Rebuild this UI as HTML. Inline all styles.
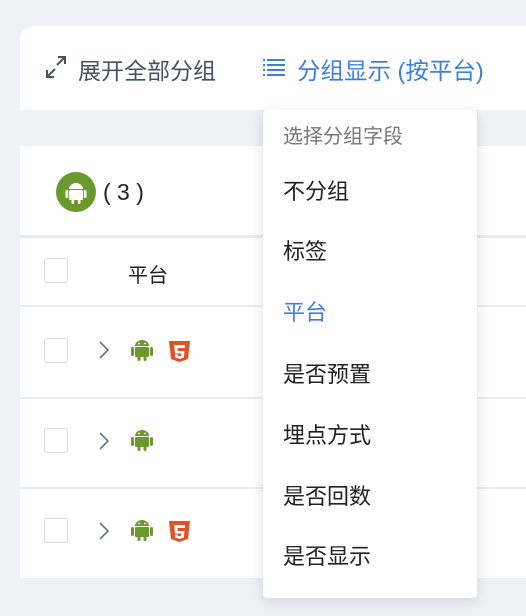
<!DOCTYPE html>
<html><head><meta charset="utf-8"><style>
*{margin:0;padding:0;box-sizing:border-box}
body{width:526px;height:616px;background:#eef2f6;position:relative;overflow:hidden;font-family:"Liberation Sans","Noto Sans CJK SC",sans-serif}
.card{position:absolute;left:20px;right:0;background:#fff}
.t{position:absolute;white-space:nowrap}
.cb{position:absolute;left:44px;width:24px;height:25px;border:1.5px solid #d9d9d9;border-radius:3px;background:#fff}
.line{position:absolute;left:20px;right:0;height:2px;background:#e6ebf0}
.dd{position:absolute;left:263px;top:110px;width:214px;height:488px;background:#fff;border-radius:4px;box-shadow:0 3px 14px rgba(0,0,0,.13)}
.dd div{position:absolute;left:20px;font-size:22px;color:#222;white-space:nowrap}
</style></head><body>
<div class="card" style="top:26px;height:84px;border-radius:14px 0 0 0"></div>
<svg class="t" style="left:44px;top:55px" width="24" height="24" viewBox="0 0 24 24" fill="none" stroke="#4a5260" stroke-width="2"><path d="M14 2h7v7M21 2l-8 8M10 22H3v-7M3 22l8-8"/></svg>
<div class="t" style="left:78px;top:52px;font-size:23px;color:#4a5260">展开全部分组</div>
<svg class="t" style="left:263px;top:57px" width="22" height="20" viewBox="0 0 22 20" fill="#3d7fe0"><rect x="0" y="2" width="2" height="2"/><rect x="4" y="2" width="18" height="2"/><rect x="0" y="7" width="2" height="2"/><rect x="4" y="7" width="18" height="2"/><rect x="0" y="12" width="2" height="2"/><rect x="4" y="12" width="18" height="2"/><rect x="0" y="17" width="2" height="2"/><rect x="4" y="17" width="18" height="2"/></svg>
<div class="t" style="left:297px;top:52px;font-size:23.5px;color:#3d7fe0">分组显示 (按平台)</div>

<div class="card" style="top:146px;height:432px"></div>
<svg class="t" style="left:56px;top:172px" width="40" height="40" viewBox="0 0 40 40"><circle cx="20" cy="20" r="20" fill="#6a9a2e"/><g fill="#fff"><path d="M13 17a7 6 0 0 1 14 0z"/><rect x="13" y="18" width="14" height="10" rx="1"/><rect x="9.5" y="18" width="2.6" height="8" rx="1.3"/><rect x="27.9" y="18" width="2.6" height="8" rx="1.3"/><rect x="15.5" y="27" width="2.6" height="5" rx="1.3"/><rect x="21.9" y="27" width="2.6" height="5" rx="1.3"/></g></svg>
<div class="t" style="left:103px;top:179px;font-size:23px;color:#222">( 3 )</div>
<div class="line" style="top:235px;height:3px"></div>
<div class="cb" style="top:258px"></div>
<div class="t" style="left:128px;top:259px;font-size:20px;color:#222">平台</div>
<div class="line" style="top:305px"></div>
<div class="line" style="top:397px"></div>
<div class="line" style="top:487px"></div>

<div class="cb" style="top:338px"></div>
<div class="cb" style="top:428px"></div>
<div class="cb" style="top:518px"></div>

<svg width="0" height="0" style="position:absolute"><defs>
<g id="and" fill="#6a9a2e"><path d="M4 7a7 6 0 0 1 14 0z"/><rect x="4" y="8" width="14" height="10" rx="1"/><rect x="0" y="8" width="3" height="9" rx="1.5"/><rect x="19" y="8" width="3" height="9" rx="1.5"/><rect x="6.5" y="17" width="3" height="5" rx="1.5"/><rect x="12.5" y="17" width="3" height="5" rx="1.5"/><circle cx="8" cy="4.5" r=".9" fill="#fff"/><circle cx="14" cy="4.5" r=".9" fill="#fff"/></g>
<g id="h5"><path d="M0 0h21l-2 18-8.5 3L2 18z" fill="#e34f26"/><path d="M5 4h11v3H8.5l.3 3H15.5l-.6 6.5-4.4 1.4-4.4-1.4-.3-3h3l.1 1.2 1.6.5 1.6-.5.2-2.2H6z" fill="#fff"/></g>
<path id="chev" d="M1 1l8 8-8 8" fill="none" stroke="#6b7380" stroke-width="1.6"/>
</defs></svg>
<svg class="t" style="left:99px;top:341px" width="12" height="19"><use href="#chev"/></svg>
<svg class="t" style="left:131px;top:339px" width="23" height="24"><use href="#and"/></svg>
<svg class="t" style="left:169px;top:341px" width="21" height="22"><use href="#h5"/></svg>
<svg class="t" style="left:99px;top:432px" width="12" height="19"><use href="#chev"/></svg>
<svg class="t" style="left:131px;top:429px" width="23" height="24"><use href="#and"/></svg>
<svg class="t" style="left:99px;top:522px" width="12" height="19"><use href="#chev"/></svg>
<svg class="t" style="left:131px;top:519px" width="23" height="24"><use href="#and"/></svg>
<svg class="t" style="left:169px;top:521px" width="21" height="22"><use href="#h5"/></svg>

<div class="dd">
<div style="top:10px;font-size:20px;color:#777">选择分组字段</div>
<div style="top:64px">不分组</div>
<div style="top:124px">标签</div>
<div style="top:185px;color:#3d7fe0">平台</div>
<div style="top:247px">是否预置</div>
<div style="top:308px">埋点方式</div>
<div style="top:369px">是否回数</div>
<div style="top:429px">是否显示</div>
</div>
</body></html>
